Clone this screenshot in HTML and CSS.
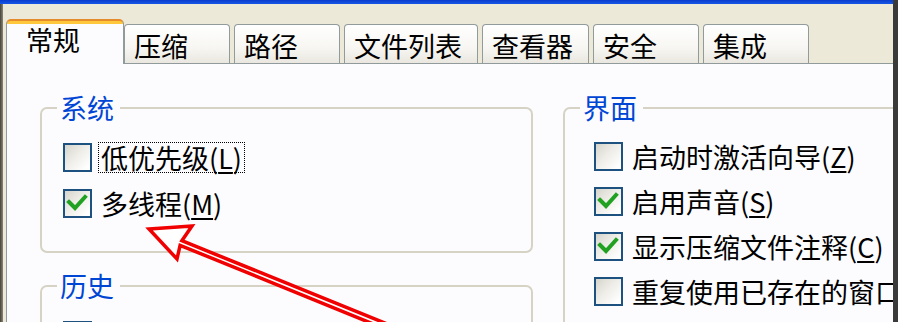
FILE: index.html
```html
<!DOCTYPE html>
<html lang="zh-CN">
<head>
<meta charset="utf-8">
<title>WinRAR 设置 - 常规</title>
<link rel="stylesheet" href="styles.css">
</head>
<body>
<div class="screen">
  <div class="main">
    <div class="titlebar"></div>
    <div class="frame">
      <div class="edge-l"></div>
      <div class="dialog">
        <div class="tabs">
          <div class="tab active">常规</div>
          <div class="tab">压缩</div>
          <div class="tab">路径</div>
          <div class="tab">文件列表</div>
          <div class="tab">查看器</div>
          <div class="tab">安全</div>
          <div class="tab">集成</div>
        </div>
        <div class="panel">
          <div class="col col-left">
            <div class="group">
              <div class="legend">系统</div>
              <div class="rows">
                <div class="row">
                  <span class="box"></span>
                  <span class="label focus">低优先级(<u>L</u>)</span>
                </div>
                <div class="row">
                  <span class="box checked"><svg viewBox="0 0 25 25" class="tick"><polyline points="4,11 10,17 20,6"/></svg></span>
                  <span class="label">多线程(<u>M</u>)</span>
                </div>
              </div>
            </div>
            <div class="group group-history">
              <div class="legend">历史</div>
              <div class="rows">
                <div class="row">
                  <span class="box"></span>
                  <span class="label"></span>
                </div>
              </div>
            </div>
          </div>
          <div class="col col-right">
            <div class="group group-right">
              <div class="legend">界面</div>
              <div class="rows">
                <div class="row">
                  <span class="box"></span>
                  <span class="label">启动时激活向导(<u>Z</u>)</span>
                </div>
                <div class="row">
                  <span class="box checked"><svg viewBox="0 0 25 25" class="tick"><polyline points="4,11 10,17 20,6"/></svg></span>
                  <span class="label">启用声音(<u>S</u>)</span>
                </div>
                <div class="row">
                  <span class="box checked"><svg viewBox="0 0 25 25" class="tick"><polyline points="4,11 10,17 20,6"/></svg></span>
                  <span class="label">显示压缩文件注释(<u>C</u>)</span>
                </div>
                <div class="row">
                  <span class="box"></span>
                  <span class="label">重复使用已存在的窗口</span>
                </div>
                <div class="row">
                  <span class="box"></span>
                  <span class="label"></span>
                </div>
              </div>
            </div>
          </div>
        </div>
      </div>
    </div>
  </div>
  <div class="edge-r"></div>
  <svg class="arrow" viewBox="0 0 898 322" width="898" height="322">
    <polygon points="149,229 192,226 181.9,240.7 460,353.5 458,358.5 180.1,245.3 177,259"/>
  </svg>
</div>
</body>
</html>
```

FILE: styles.css
```css
* {
  box-sizing: border-box;
}

html,
body {
  margin: 0;
  padding: 0;
}

body {
  width: 898px;
  height: 322px;
  overflow: hidden;
  background: #ece9d8;
  font-family: "Noto Sans CJK SC", "Noto Sans", sans-serif;
  color: #000;
}

.screen {
  position: relative;
  display: flex;
  width: 898px;
  height: 322px;
  overflow: hidden;
}

.main {
  flex: 1;
  min-width: 0;
  display: flex;
  flex-direction: column;
}

.titlebar {
  flex: none;
  height: 4px;
  background: linear-gradient(#0a3ccc, #1656e6);
}

.frame {
  flex: 1;
  min-height: 0;
  display: flex;
}

.edge-l {
  flex: none;
  width: 3px;
  background: linear-gradient(90deg, #45423a, #8a8776);
}

.edge-r {
  flex: none;
  width: 5px;
  background: #3a3a3a;
}

.dialog {
  flex: 1;
  min-width: 0;
  display: flex;
  flex-direction: column;
  background: #ece9d8;
  overflow: hidden;
}

/* Tabs */
.tabs {
  flex: none;
  height: 59px;
  display: flex;
  align-items: flex-end;
  padding-left: 3px;
}

.tab {
  height: 39px;
  min-width: 106px;
  padding: 7px 15px 0 9px;
  border: 1px solid #919b9c;
  border-bottom: none;
  border-radius: 4px 4px 0 0;
  background: linear-gradient(#ffffff, #f7f6f2 60%, #e9e7df);
  font-size: 27px;
  line-height: 27px;
  white-space: nowrap;
}

.tab + .tab {
  margin-left: 4px;
}

.tab.active + .tab {
  margin-left: 0;
}

.tab.active {
  position: relative;
  z-index: 1;
  width: 118px;
  height: 45px;
  margin-bottom: -1px;
  padding: 5px 0 0 19px;
  border-top: 2px solid #e68b2c;
  border-radius: 5px 5px 0 0;
  background: linear-gradient(#ffc83c 0, #ffc83c 3px, #fcfcfe 3px);
}

/* Panel */
.panel {
  flex: 1;
  display: flex;
  gap: 30px;
  margin-left: 3px;
  padding: 43px 0 0 33px;
  border-top: 1px solid #919b9c;
  border-left: 1px solid #919b9c;
  background: #fcfcfe;
}

.col {
  flex: none;
  display: flex;
  flex-direction: column;
}

.col-left {
  width: 493px;
}

.col-right {
  width: 440px;
}

.group {
  border: 2px solid #d6d3c4;
  border-radius: 7px;
  padding-bottom: 25px;
}

.group + .group {
  margin-top: 32px;
}

.legend {
  display: table;
  margin: -15px 0 0 15px;
  padding: 0 6px 0 3px;
  background: #fcfcfe;
  color: #0046d5;
  font-size: 27px;
  line-height: 27px;
}

.rows {
  display: flex;
  flex-direction: column;
  margin-top: 13px;
  padding-left: 21px;
}

.group-right .rows {
  padding-left: 29px;
}

.row {
  height: 46px;
  display: flex;
  align-items: center;
}

.group-right .row {
  height: 45px;
}

.box {
  flex: none;
  width: 29px;
  height: 29px;
  border: 2px solid #1c5180;
  background: linear-gradient(135deg, #d6d5cc 0%, #eeede8 45%, #ffffff 90%);
}

.tick {
  display: block;
  width: 25px;
  height: 25px;
}

.tick polyline {
  fill: none;
  stroke: #21a121;
  stroke-width: 4;
  stroke-linecap: square;
  stroke-linejoin: miter;
}

.label {
  margin-left: 6px;
  padding: 0 2px;
  border: 1px dotted transparent;
  font-size: 27px;
  line-height: 29px;
  white-space: nowrap;
}

.label.focus {
  border-color: #000;
}

.label u {
  text-underline-offset: 3px;
}

/* Annotation arrow */
.arrow {
  position: absolute;
  left: 0;
  top: 0;
  pointer-events: none;
}

.arrow polygon {
  fill: #ffffff;
  stroke: #f00000;
  stroke-width: 3.5;
  stroke-linejoin: miter;
}
```
